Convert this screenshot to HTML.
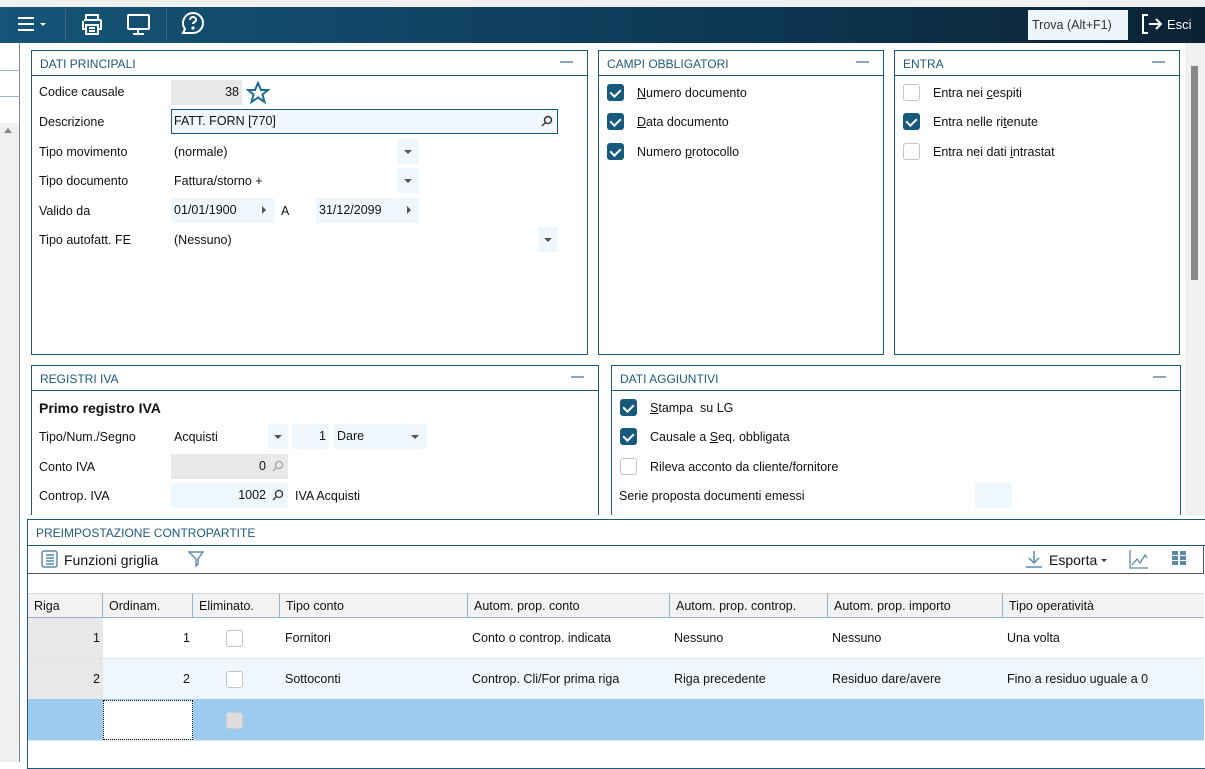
<!DOCTYPE html><html><head><meta charset="utf-8"><style>
*{box-sizing:border-box;margin:0;padding:0}
body{width:1205px;height:762px;overflow:hidden;background:#fff;font-family:"Liberation Sans","DejaVu Sans",sans-serif;font-size:12.5px;color:#111;position:relative}
.a{position:absolute}
.top{left:0;top:7px;width:1205px;height:36px;background:linear-gradient(90deg,#155578,#0d3854 60%,#0b2234)}
.pn{position:absolute;border:1px solid #1d5a7a;background:#fff}
.pt{height:25px;border-bottom:1px solid #1d5a7a;color:#1d5a7a;font-size:12px;padding:6px 0 0 8px;position:relative}
.pt.m:after{content:"";position:absolute;right:14px;top:10px;width:13px;height:2px;background:#8aa6b8}
.lb{position:absolute;font-size:12.5px}
.fd{position:absolute;background:#eff7fd;height:25px;padding:5px 3px;font-size:12.5px}
.dd{position:absolute;background:#eff7fd;width:20px;height:25px}
.dd:after{content:"";position:absolute;left:6px;top:11px;border:4px solid transparent;border-top:4px solid #555;border-bottom:0}
.ar:after{content:"";position:absolute;right:8px;top:8px;border:4px solid transparent;border-left:4px solid #555;border-right:0}
.cb{position:absolute;width:17px;height:17px;border-radius:3px;background:#175a7d}
.cb:after{content:"";position:absolute;left:5px;top:3px;width:5px;height:8px;border:solid #fff;border-width:0 2px 2px 0;transform:rotate(45deg)}
.ce{position:absolute;width:17px;height:17px;border-radius:3px;border:1.5px solid #c4c4c4;background:#fff}
.th{position:absolute;top:593px;height:25px;background:#f2f2f2;border-right:1px solid #9fb0c0;border-bottom:1px solid #9fb0c0;border-top:1px solid #d0d8e0;padding:5px 6px;font-size:12.5px}
.td{position:absolute;font-size:12.5px}
</style></head><body>
<div class="a" style="left:0;top:0;width:1205px;height:7px;background:#f0f0f0"></div>
<div class="a top"></div>
<svg class="a" style="left:16px;top:14px" width="36" height="22"><path d="M2 4h16M2 10h16M2 16h16" stroke="#fff" stroke-width="2"/><path d="M24 9l3 3 3-3z" fill="#fff"/></svg>
<div class="a" style="left:65px;top:9px;width:1px;height:32px;background:#3a6a88"></div>
<svg class="a" style="left:80px;top:12px" width="24" height="24" fill="none" stroke="#fff" stroke-width="2"><path d="M6 8V3h12v5M4 8h16a1 1 0 011 1v8h-3M6 17H3V9M6 13h12v9H6z M9 16h6M9 19h6"/></svg>
<svg class="a" style="left:126px;top:13px" width="26" height="22" fill="none" stroke="#fff" stroke-width="2"><rect x="2" y="2" width="21" height="14" rx="1"/><path d="M12 16v4M7 21h11"/></svg>
<div class="a" style="left:166px;top:9px;width:1px;height:32px;background:#3a6a88"></div>
<svg class="a" style="left:180px;top:11px" width="26" height="26" fill="none" stroke="#fff" stroke-width="2"><path d="M13 2a10 10 0 110 20H3l2-4A10 10 0 0113 2z"/><path d="M10 9a3 3 0 116 0c0 2-3 2-3 4" /><circle cx="13" cy="17" r=".6" fill="#fff"/></svg>
<div class="a" style="left:1028px;top:10px;width:100px;height:30px;background:#eef6fb;color:#333;padding:8px 4px;font-size:12.5px">Trova (Alt+F1)</div>
<svg class="a" style="left:1140px;top:12px" width="24" height="24" fill="none" stroke="#fff" stroke-width="2"><path d="M8 3H3v18h5M9 12h12M16 7l5 5-5 5"/></svg>
<div class="a" style="left:1167px;top:17px;color:#fff;font-size:13px">Esci</div>
<div class="a" style="left:0;top:43px;width:20px;height:719px;background:#f0f0f0;border-right:1px solid #7a8a96"></div>
<div class="a" style="left:0;top:43px;width:20px;height:80px;background:#fff;border-right:1px solid #7a8a96"></div>
<div class="a" style="left:0;top:70px;width:20px;height:1px;background:#9fb4c4"></div>
<div class="a" style="left:0;top:96px;width:20px;height:1px;background:#9fb4c4"></div>
<div class="a" style="left:4px;top:128px;border:4px solid transparent;border-bottom:5px solid #888;border-top:0"></div>
<div class="a" style="left:1185px;top:43px;width:20px;height:472px;background:#f0f0f0"></div>
<div class="a" style="left:1191px;top:66px;width:7px;height:214px;background:#888"></div>
<div class="pn" style="left:31px;top:50px;width:557px;height:305px"><div class="pt m">DATI PRINCIPALI</div></div>
<div class="lb" style="left:39px;top:85px">Codice causale</div>
<div class="fd" style="left:171px;top:80px;width:71px;background:#e8e8e8;text-align:right">38</div>
<svg class="a" style="left:246px;top:81px" width="24" height="24" fill="none" stroke="#1d6a94" stroke-width="2"><path d="M12 2l3 7h7l-5.5 4.5 2 7.5L12 16.5 5.5 21l2-7.5L2 9h7z"/></svg>
<div class="lb" style="left:39px;top:115px">Descrizione</div>
<div class="fd" style="left:171px;top:109px;width:387px;height:25px;border:1px solid #1d5a7a;padding:4px 2px">FATT. FORN [770]</div>
<svg class="a" style="left:541px;top:115px" width="12" height="12" fill="none" stroke="#333" stroke-width="1.5"><circle cx="7" cy="5" r="3.5"/><path d="M4.5 7.5L1 11"/></svg>
<div class="lb" style="left:39px;top:145px">Tipo movimento</div>
<div class="lb" style="left:174px;top:145px">(normale)</div><div class="dd" style="left:398px;top:139px"></div>
<div class="lb" style="left:39px;top:174px">Tipo documento</div>
<div class="lb" style="left:174px;top:174px">Fattura/storno +</div><div class="dd" style="left:398px;top:168px"></div>
<div class="lb" style="left:39px;top:204px">Valido da</div>
<div class="fd ar" style="left:171px;top:198px;width:103px">01/01/1900</div>
<div class="lb" style="left:281px;top:204px">A</div>
<div class="fd ar" style="left:316px;top:198px;width:103px">31/12/2099</div>
<div class="lb" style="left:39px;top:233px">Tipo autofatt. FE</div>
<div class="lb" style="left:174px;top:233px">(Nessuno)</div><div class="dd" style="left:538px;top:227px"></div>
<div class="pn" style="left:598px;top:50px;width:286px;height:305px"><div class="pt m">CAMPI OBBLIGATORI</div></div>
<div class="cb" style="left:607px;top:84px"></div><div class="lb" style="left:637px;top:86px"><u>N</u>umero documento</div>
<div class="cb" style="left:607px;top:113px"></div><div class="lb" style="left:637px;top:115px"><u>D</u>ata documento</div>
<div class="cb" style="left:607px;top:143px"></div><div class="lb" style="left:637px;top:145px">Numero <u>p</u>rotocollo</div>
<div class="pn" style="left:894px;top:50px;width:286px;height:305px"><div class="pt m">ENTRA</div></div>
<div class="ce" style="left:903px;top:84px"></div><div class="lb" style="left:933px;top:86px">Entra nei <u>c</u>espiti</div>
<div class="cb" style="left:903px;top:113px"></div><div class="lb" style="left:933px;top:115px">Entra nelle ri<u>t</u>enute</div>
<div class="ce" style="left:903px;top:143px"></div><div class="lb" style="left:933px;top:145px">Entra nei dati <u>i</u>ntrastat</div>
<div class="pn" style="left:31px;top:365px;width:568px;height:150px;border-bottom:0"><div class="pt m">REGISTRI IVA</div></div>
<div class="lb" style="left:39px;top:400px;font-weight:bold;font-size:14px">Primo registro IVA</div>
<div class="lb" style="left:39px;top:430px">Tipo/Num./Segno</div>
<div class="lb" style="left:174px;top:430px">Acquisti</div><div class="dd" style="left:268px;top:424px"></div>
<div class="fd" style="left:292px;top:424px;width:37px;text-align:right">1</div>
<div class="fd" style="left:334px;top:424px;width:93px">Dare</div><div class="dd" style="left:405px;top:424px;background:none"></div>
<div class="lb" style="left:39px;top:460px">Conto IVA</div>
<div class="fd" style="left:171px;top:454px;width:117px;background:#e8e8e8;text-align:right;padding-right:22px">0</div>
<svg class="a" style="left:272px;top:460px" width="12" height="12" fill="none" stroke="#aaa" stroke-width="1.5"><circle cx="7" cy="5" r="3.5"/><path d="M4.5 7.5L1 11"/></svg>
<div class="lb" style="left:39px;top:489px">Controp. IVA</div>
<div class="fd" style="left:171px;top:483px;width:117px;text-align:right;padding-right:22px">1002</div>
<svg class="a" style="left:272px;top:489px" width="12" height="12" fill="none" stroke="#444" stroke-width="1.5"><circle cx="7" cy="5" r="3.5"/><path d="M4.5 7.5L1 11"/></svg>
<div class="lb" style="left:295px;top:489px">IVA Acquisti</div>
<div class="pn" style="left:611px;top:365px;width:570px;height:150px;border-bottom:0"><div class="pt m">DATI AGGIUNTIVI</div></div>
<div class="cb" style="left:620px;top:399px"></div><div class="lb" style="left:650px;top:401px"><u>S</u>tampa &nbsp;su LG</div>
<div class="cb" style="left:620px;top:428px"></div><div class="lb" style="left:650px;top:430px">Causale a <u>S</u>eq. obbligata</div>
<div class="ce" style="left:620px;top:458px"></div><div class="lb" style="left:650px;top:460px">Rileva acconto da cliente/fornitore</div>
<div class="lb" style="left:619px;top:489px">Serie proposta documenti emessi</div>
<div class="a" style="left:975px;top:483px;width:37px;height:25px;background:#eff7fd"></div>
<div class="pn" style="left:27px;top:519px;width:1178px;height:250px;border-right:0">
<div class="pt" style="height:26px;border-bottom:1px solid #1d5a7a">PREIMPOSTAZIONE CONTROPARTITE</div></div>
<div class="a" style="left:28px;top:573px;width:1176px;height:1px;background:#555"></div>
<div class="a" style="left:1203px;top:545px;width:1px;height:29px;background:#555"></div>
<svg class="a" style="left:41px;top:550px" width="18" height="18" fill="none" stroke="#5a8aa8" stroke-width="1.5"><rect x="1" y="1" width="15" height="16" rx="2"/><path d="M5 5h8M5 8h8M5 11h8M5 14h8"/></svg>
<div class="lb" style="left:64px;top:552px;font-size:14px">Funzioni griglia</div>
<svg class="a" style="left:188px;top:550px" width="16" height="18" fill="none" stroke="#5a8aa8" stroke-width="1.4"><path d="M1 2h14l-5 7v5l-2 2V9z"/></svg>
<svg class="a" style="left:1025px;top:550px" width="18" height="18" fill="none" stroke="#5a8aa8" stroke-width="1.5"><path d="M9 1v12M4 8l5 5 5-5M1 17h16"/></svg>
<div class="lb" style="left:1049px;top:552px;font-size:14px">Esporta</div>
<div class="a" style="left:1101px;top:559px;border:3px solid transparent;border-top:3px solid #333;border-bottom:0"></div>
<svg class="a" style="left:1129px;top:549px" width="20" height="20" fill="none" stroke="#5a8aa8" stroke-width="1.3"><path d="M1 1v18h18M3 16l5-6 3 4 5-8 2 3"/></svg>
<svg class="a" style="left:1172px;top:551px" width="14" height="14" fill="#5a8aa8"><rect x="0" y="0" width="6" height="4"/><rect x="8" y="0" width="6" height="4"/><rect x="0" y="5" width="6" height="4"/><rect x="8" y="5" width="6" height="4"/><rect x="0" y="10" width="6" height="4"/><rect x="8" y="10" width="6" height="4"/></svg>
<div class="th" style="left:28px;width:75px">Riga</div>
<div class="th" style="left:103px;width:90px">Ordinam.</div>
<div class="th" style="left:193px;width:87px">Eliminato.</div>
<div class="th" style="left:280px;width:188px">Tipo conto</div>
<div class="th" style="left:468px;width:202px">Autom. prop. conto</div>
<div class="th" style="left:670px;width:158px">Autom. prop. controp.</div>
<div class="th" style="left:828px;width:175px">Autom. prop. importo</div>
<div class="th" style="left:1003px;width:201px;border-right:0">Tipo operatività</div>
<div class="a" style="left:28px;top:618px;width:75px;height:82px;background:#e8e8e8"></div>
<div class="a" style="left:28px;top:658px;width:1176px;height:1px;background:#dde5ec"></div>
<div class="a" style="left:103px;top:659px;width:1101px;height:40px;background:#eff7fd"></div>
<div class="a" style="left:28px;top:699px;width:1176px;height:41px;background:#9ccbf0"></div>
<div class="a" style="left:103px;top:700px;width:90px;height:40px;background:#fff;border:1px dotted #000"></div>
<div class="td" style="left:28px;top:631px;width:72px;text-align:right">1</div>
<div class="td" style="left:103px;top:631px;width:87px;text-align:right">1</div>
<div class="ce" style="left:226px;top:630px"></div>
<div class="td" style="left:285px;top:631px">Fornitori</div>
<div class="td" style="left:472px;top:631px">Conto o controp. indicata</div>
<div class="td" style="left:674px;top:631px">Nessuno</div>
<div class="td" style="left:832px;top:631px">Nessuno</div>
<div class="td" style="left:1007px;top:631px">Una volta</div>
<div class="td" style="left:28px;top:672px;width:72px;text-align:right">2</div>
<div class="td" style="left:103px;top:672px;width:87px;text-align:right">2</div>
<div class="ce" style="left:226px;top:671px"></div>
<div class="td" style="left:285px;top:672px">Sottoconti</div>
<div class="td" style="left:472px;top:672px">Controp. Cli/For prima riga</div>
<div class="td" style="left:674px;top:672px">Riga precedente</div>
<div class="td" style="left:832px;top:672px">Residuo dare/avere</div>
<div class="td" style="left:1007px;top:672px">Fino a residuo uguale a 0</div>
<div class="ce" style="left:226px;top:712px;background:#ddd;border-color:#ccc"></div>
<div class="a" style="left:28px;top:740px;width:1176px;height:1px;background:#dde5ec"></div>
</body></html>
